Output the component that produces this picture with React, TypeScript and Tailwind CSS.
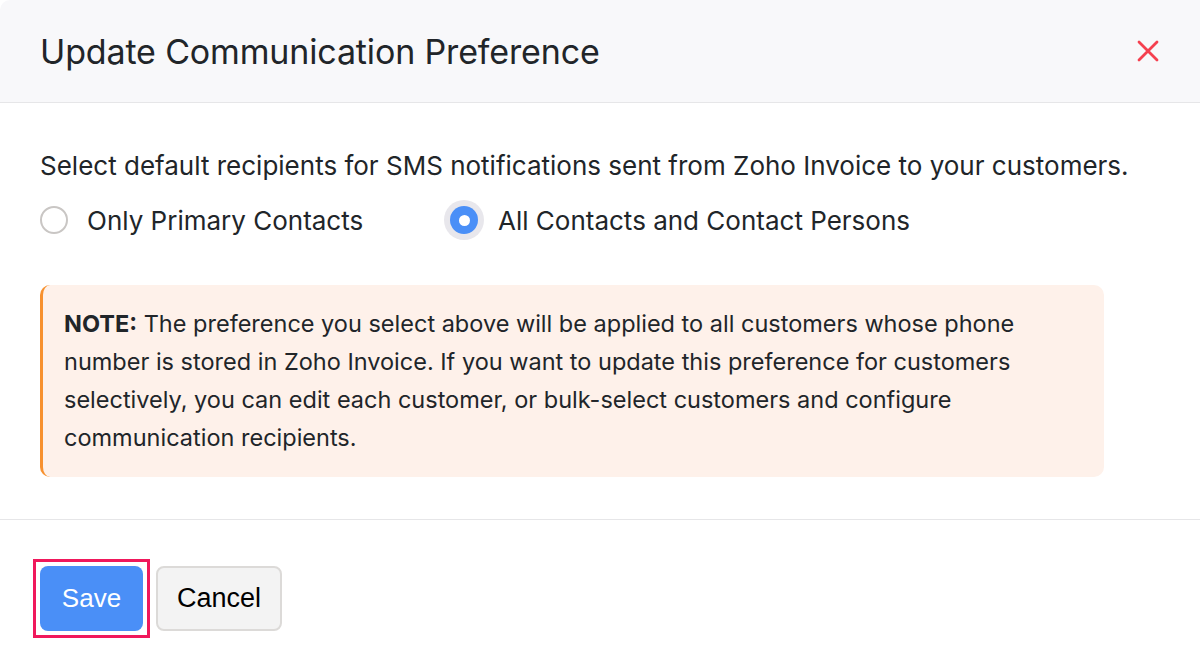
import React, { useState } from 'react';

const App: React.FC = () => {
  const [choice, setChoice] = useState<'primary' | 'all'>('all');

  return (
    <div className="w-[1200px] h-[666px] bg-white overflow-hidden" style={{ fontFamily: 'Inter, "Noto Sans", sans-serif' }}>
      <div className="flex flex-col h-full rounded-tl-[10px] overflow-hidden bg-white">
        {/* header */}
        <div className="h-[103px] shrink-0 flex items-center justify-between pl-10 pr-[36px] bg-[#f8f8fa] border-b border-[#e6e6e8]">
          <h2 className="text-[34px] text-[#212529] tracking-[-0.15px] font-normal">Update Communication Preference</h2>
          <button className="text-[#f5404f] w-8 h-8 flex items-center justify-center">
            <svg width="22" height="22" viewBox="0 0 22 22" fill="none" stroke="currentColor" strokeWidth="2.8" strokeLinecap="round">
              <path d="M2 2l18 18M20 2L2 20" />
            </svg>
          </button>
        </div>

        {/* body */}
        <div className="px-10 pt-[47px] pb-[42px] border-b border-[#e6e6e8]">
          <p className="text-[26px] text-[#212529] leading-[32px]">
            Select default recipients for SMS notifications sent from Zoho Invoice to your customers.
          </p>
          <div className="flex items-center mt-[16px] h-[44px]">
            <label className="flex items-center gap-[19px] w-[404px] cursor-pointer" onClick={() => setChoice('primary')}>
              <span className={choice === 'primary' ? 'w-[28px] h-[28px] rounded-full bg-[#4a8ff7] flex items-center justify-center' : 'w-[28px] h-[28px] rounded-full border-2 border-[#c9c6c4] bg-white'}>
                {choice === 'primary' && <span className="w-[10px] h-[10px] rounded-full bg-white" />}
              </span>
              <span className="text-[26px] text-[#212529]">Only Primary Contacts</span>
            </label>
            <label className="flex items-center gap-[14px] cursor-pointer" onClick={() => setChoice('all')}>
              <span className="w-[40px] h-[40px] rounded-full bg-[#e8e7ec] flex items-center justify-center">
                <span className={choice === 'all' ? 'w-[28px] h-[28px] rounded-full bg-[#4a8ff7] flex items-center justify-center' : 'w-[28px] h-[28px] rounded-full border-2 border-[#c9c6c4] bg-white'}>
                  {choice === 'all' && <span className="w-[11px] h-[11px] rounded-full bg-white" />}
                </span>
              </span>
              <span className="text-[26px] text-[#212529]">All Contacts and Contact Persons</span>
            </label>
          </div>

          <div className="mt-[43px] w-[1064px] rounded-[10px] border-l-[3px] border-[#f7912f] bg-[#fef1ea] pl-[21px] pr-[60px] pt-[20px] pb-[20px]">
            <p className="text-[23.5px] leading-[38px] text-[#212529]">
              <span className="font-bold">NOTE:</span> The preference you select above will be applied to all customers whose phone number is stored in Zoho Invoice. If you want to update this preference for customers selectively, you can edit each customer, or bulk-select customers and configure communication recipients.
            </p>
          </div>
        </div>

        {/* footer */}
        <div className="flex items-start gap-[6px] pl-[33px] pt-[39px]">
          <div className="border-[3px] border-[#f0185c] p-[4px]">
            <button className="w-[103px] h-[65px] rounded-[8px] bg-[#4a8ff7] text-white text-[26px]" style={{ fontFamily: '"Liberation Sans", Arial, sans-serif' }}>
              Save
            </button>
          </div>
          <button className="mt-[7px] w-[126px] h-[65px] rounded-[8px] bg-[#f3f3f3] border-2 border-[#dcdad8] text-black text-[27px]" style={{ fontFamily: '"Liberation Sans", Arial, sans-serif' }}>
            Cancel
          </button>
        </div>
      </div>
    </div>
  );
};

export default App;
